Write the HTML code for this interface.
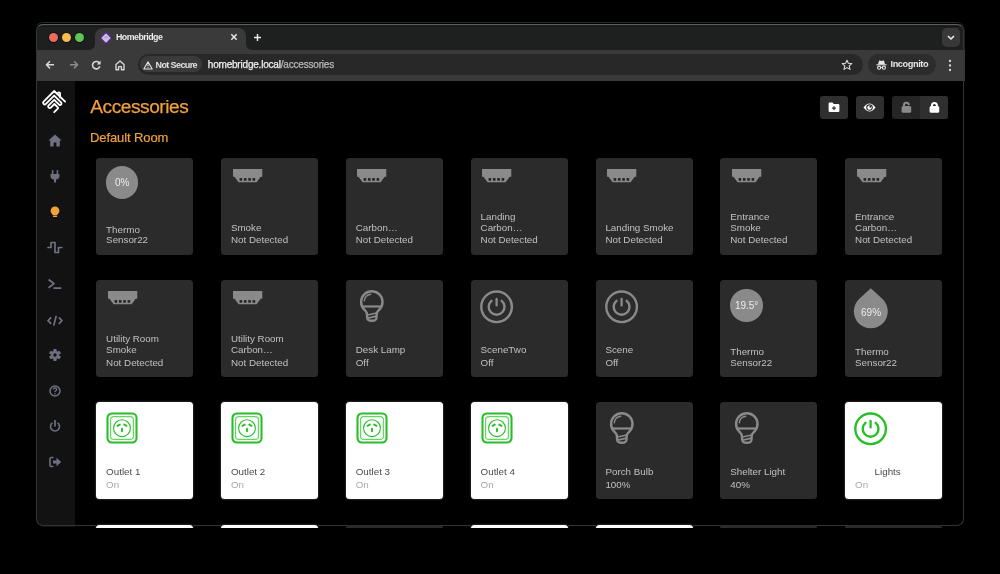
<!DOCTYPE html><html><head><meta charset="utf-8"><style>
*{box-sizing:border-box;margin:0;padding:0}
html,body{width:1000px;height:574px;background:#000;overflow:hidden;font-family:"Liberation Sans",sans-serif}
body{will-change:transform}
.a{position:absolute}
#win{position:absolute;left:35.5px;top:23px;width:929px;height:504px;border-radius:8px;overflow:hidden;background:#000}
#winborder{position:absolute;left:35.6px;top:24.3px;width:928.6px;height:501.7px;border-radius:7px;border:1.2px solid #343434;border-top-color:#5c5c5c;pointer-events:none}
#outer{position:absolute;left:34px;top:21.8px;width:932px;height:507.4px;border-radius:9px;border:1px solid transparent;border-top-color:#272727}
.tile{position:absolute;width:97px;height:97px;border-radius:3.5px;background:#2b2b2b}
.tile.on{background:#fff;box-shadow:0 0 0 1.2px #1c1c1c}
.t{position:absolute;left:9.8px;font-size:9.8px;line-height:10px;white-space:nowrap;color:#c0c0c0}
.on .t{color:#4a4a4a}
.on .t.s{color:#a8a8a8}
.circ{position:absolute;border-radius:50%;background:#8a8a8a;color:#ececec;font-size:10px;line-height:10px;text-align:center}
.btn{position:absolute;height:23px;border-radius:3px;background:#2f2f2f}
</style></head><body>
<div id="outer"></div>
<div id="win">
<div class="a" style="left:0;top:0;width:929px;height:27px;background:#1e1f1f"></div>
<div class="a" style="left:0;top:0;width:929px;height:1.3px;background:#000"></div>
<div class="a" style="left:0;top:2.6px;width:929px;height:1px;background:#171717"></div>
<div class="a" style="left:13.3px;top:10.2px;width:9px;height:9px;border-radius:50%;background:#ed6a5e;box-shadow:0 0 0 0.7px #0e0e0e"></div>
<div class="a" style="left:26.3px;top:10.2px;width:9px;height:9px;border-radius:50%;background:#f4be4f;box-shadow:0 0 0 0.7px #0e0e0e"></div>
<div class="a" style="left:39.3px;top:10.2px;width:9px;height:9px;border-radius:50%;background:#61c454;box-shadow:0 0 0 0.7px #0e0e0e"></div>
<div class="a" style="left:59.5px;top:5.3px;width:150.5px;height:22px;background:#3a3a3a;border-radius:8px 8px 0 0"></div>
<div class="a" style="left:53.5px;top:21px;width:6px;height:6px;background:radial-gradient(circle at 0 0,#1e1f1f 5.6px,#3a3a3a 6.2px)"></div>
<div class="a" style="left:210px;top:21px;width:6px;height:6px;background:radial-gradient(circle at 100% 0,#1e1f1f 5.6px,#3a3a3a 6.2px)"></div>
<svg class="a" style="left:64.6px;top:8.8px" width="12" height="12" viewBox="0 0 12 12"><path d="M6 0.9 Q6.6 0.9 7 1.3 L10.7 5 Q11.1 5.4 11.1 6 Q11.1 6.6 10.7 7 L7 10.7 Q6.6 11.1 6 11.1 Q5.4 11.1 5 10.7 L1.3 7 Q0.9 6.6 0.9 6 Q0.9 5.4 1.3 5 L5 1.3 Q5.4 0.9 6 0.9Z" fill="#c9bde0" stroke="#55239a" stroke-width="1.2"/><path d="M4 6.4 L6 4.4 L8 6.4" stroke="#8f7ab8" stroke-width="0.7" fill="none"/></svg>
<div class="a" style="left:80.5px;top:9.2px;font-size:8.8px;line-height:10px;font-weight:bold;color:#ececec;letter-spacing:-0.5px">Homebridge</div>
<svg class="a" style="left:194.9px;top:10.3px" width="8" height="8" viewBox="0 0 8 8"><path d="M1.3 1.3L6.7 6.7M6.7 1.3L1.3 6.7" stroke="#e8e8e8" stroke-width="1.5"/></svg>
<svg class="a" style="left:217.6px;top:9.8px" width="9" height="9" viewBox="0 0 9 9"><path d="M4.5 1V8M1 4.5H8" stroke="#e8e8e8" stroke-width="1.5"/></svg>
<div class="a" style="left:906.5px;top:5px;width:18px;height:18.5px;border-radius:5px;background:#383838"></div>
<svg class="a" style="left:911.5px;top:11.5px" width="8" height="6" viewBox="0 0 8 6"><path d="M1 1L4 4L7 1" stroke="#f0f0f0" stroke-width="1.5" fill="none"/></svg>
<div class="a" style="left:0;top:27px;width:929px;height:31px;background:#3a3a3a"></div>
<div class="a" style="left:0;top:27px;width:929px;height:31px">
<svg class="a" style="left:9.8px;top:10.3px" width="10" height="10" viewBox="0 0 10 10"><path d="M9 4.8H1.6M5 1.2L1.4 4.8L5 8.4" stroke="#d6d6d6" stroke-width="1.55" fill="none" stroke-linejoin="round"/></svg>
<svg class="a" style="left:33.3px;top:10.3px" width="10" height="10" viewBox="0 0 10 10"><path d="M1 4.8H8.4M5 1.2L8.6 4.8L5 8.4" stroke="#8c8c8c" stroke-width="1.5" fill="none" stroke-linejoin="round"/></svg>
<svg class="a" style="left:55.6px;top:10.2px" width="11" height="10" viewBox="0 0 11 10"><path d="M8.6 3.6A3.7 3.7 0 1 0 8.8 6.2" stroke="#d6d6d6" stroke-width="1.6" fill="none"/><path d="M9.6 0.6V4.4H5.8Z" fill="#d6d6d6"/></svg>
<svg class="a" style="left:79.6px;top:9.8px" width="10" height="11" viewBox="0 0 10 11"><path d="M1 4.6L5 1L9 4.6V9.8H6.4V6.6H3.6V9.8H1Z" stroke="#d6d6d6" stroke-width="1.4" fill="none" stroke-linejoin="round"/></svg>
<div class="a" style="left:102px;top:4px;width:725px;height:21px;border-radius:10.5px;background:#282828"></div>
<div class="a" style="left:104.5px;top:6.2px;width:62px;height:16px;border-radius:8px;background:#3a3a3a"></div>
<svg class="a" style="left:107.5px;top:10.5px" width="10" height="9" viewBox="0 0 10 9"><path d="M5 0.9L9.2 8H0.8Z" stroke="#e2e2e2" stroke-width="1.1" fill="none" stroke-linejoin="round"/><path d="M5 3.3V5.4" stroke="#e2e2e2" stroke-width="1"/><circle cx="5" cy="6.6" r="0.55" fill="#e2e2e2"/></svg>
<div class="a" style="left:120px;top:9.5px;font-size:9px;line-height:10px;font-weight:bold;color:#e2e2e2;letter-spacing:-0.6px">Not Secure</div>
<div class="a" style="left:172.3px;top:9px;font-size:10px;line-height:11px;color:#f0f0f0;letter-spacing:-0.2px;-webkit-text-stroke:0.25px #f0f0f0">homebridge.local<span style="color:#b8b8b8;-webkit-text-stroke:0.25px #b8b8b8">/accessories</span></div>
<svg class="a" style="left:805px;top:9px" width="12" height="12" viewBox="0 0 12 12"><path d="M6 1.2L7.35 4.3L10.8 4.6L8.2 6.9L9 10.4L6 8.6L3 10.4L3.8 6.9L1.2 4.6L4.65 4.3Z" stroke="#dadada" stroke-width="1.1" fill="none" stroke-linejoin="round"/></svg>
<div class="a" style="left:832px;top:4px;width:68px;height:21px;border-radius:10.5px;background:#2c2c2c"></div>
<svg class="a" style="left:840px;top:10px" width="11" height="10" viewBox="0 0 11 10"><path d="M3 0.8Q3.3 0.3 3.8 0.5L5.5 1L7.2 0.5Q7.7 0.3 8 0.8L9 4.2H2Z" fill="#e6e6e6"/><path d="M0.4 4.8H10.6" stroke="#e6e6e6" stroke-width="1.1"/><circle cx="3.1" cy="7.7" r="1.55" stroke="#e6e6e6" stroke-width="1.1" fill="none"/><circle cx="7.9" cy="7.7" r="1.55" stroke="#e6e6e6" stroke-width="1.1" fill="none"/><path d="M4.6 7.5H6.4" stroke="#e6e6e6" stroke-width="0.9"/></svg>
<div class="a" style="left:855px;top:9.3px;font-size:9.2px;line-height:10px;font-weight:bold;color:#e6e6e6;letter-spacing:-0.4px">Incognito</div>
<svg class="a" style="left:912px;top:8.5px" width="4" height="13" viewBox="0 0 4 13"><circle cx="2" cy="2" r="1.15" fill="#dcdcdc"/><circle cx="2" cy="6.5" r="1.15" fill="#dcdcdc"/><circle cx="2" cy="11" r="1.15" fill="#dcdcdc"/></svg>
</div>
<div class="a" style="left:0;top:58px;width:929px;height:446px;background:#000">
<div class="a" style="left:0;top:0;width:39.5px;height:446px;background:#121212"></div>
</div>
</div>
<div id="winborder"></div>
<div class="a" style="left:0;top:0;width:1000px;height:528px;overflow:hidden">
<div class="a" style="left:0;top:0;width:1000px;height:1000px;clip-path:inset(81px 36.3px 46.7px 36.3px round 0 0 8px 8px)">
<svg class="a" style="left:40px;top:88px" width="30" height="30" viewBox="0 0 30 30"><g fill="none" stroke="#fff" stroke-width="1.85" stroke-linecap="round" stroke-linejoin="round" transform="translate(0 0.4)"><path d="M25.1,13.2 L14.2,2.6 L3.6,13.2 A1.6,1.6 0 0 0 5.9,15.5 L14.2,7.2 L21.2,14.2 A1.5,1.5 0 0 1 19.1,16.3 L14.2,11.4 L8.4,17.2 A1.6,1.6 0 0 0 10.6,19.4 L14.4,15.6 L17.8,19 Q18.4,19.6 17.8,20.2 L14.2,23.8"/><path d="M17.7,5 Q17.9,4 18.9,4 Q20.1,4 20.1,5 V9"/></g></svg>
<svg class="a" style="left:48px;top:133.5px" width="14" height="13" viewBox="0 0 14 13"><path d="M7 0.6 L13.6 6.6 H11.8 V12.4 H8.4 V8.6 H5.6 V12.4 H2.2 V6.6 H0.4Z" fill="#6e7080"/></svg>
<svg class="a" style="left:50px;top:169.5px" width="10" height="13" viewBox="0 0 10 13"><path d="M2.6 0.8V4M7.4 0.8V4" stroke="#6e7080" stroke-width="1.6" stroke-linecap="round"/><path d="M0.5 4H9.5V6.2Q9.5 9.2 6 9.6V12.4H4V9.6Q0.5 9.2 0.5 6.2Z" fill="#6e7080"/></svg>
<svg class="a" style="left:50px;top:205.5px" width="10" height="12" viewBox="0 0 10 12"><path d="M5 0.5A4.4 4.4 0 0 1 9.4 4.9C9.4 6.6 7.8 7.6 7.3 9H2.7C2.2 7.6 0.6 6.6 0.6 4.9A4.4 4.4 0 0 1 5 0.5Z" fill="#f2a33a"/><rect x="2.9" y="9.6" width="4.2" height="1.3" rx="0.5" fill="#f2a33a"/></svg>
<svg class="a" style="left:47px;top:240.5px" width="16" height="13" viewBox="0 0 16 13"><path d="M1 6.5H4V1.5H8V11.5H11.5V6.5H14.8" stroke="#6e7080" stroke-width="1.7" fill="none" stroke-linejoin="round" stroke-linecap="round"/></svg>
<svg class="a" style="left:47px;top:277.5px" width="16" height="12" viewBox="0 0 16 12"><path d="M1.6 1.5L6.8 5.6L1.6 9.7" stroke="#6e7080" stroke-width="1.8" fill="none"/><path d="M6.5 10.2H14.3" stroke="#6e7080" stroke-width="1.8"/></svg>
<svg class="a" style="left:47px;top:314.5px" width="16" height="12" viewBox="0 0 16 12"><path d="M4.2 2.4L1 5.6L4.2 8.8M11.8 2.4L15 5.6L11.8 8.8M9.3 0.8L6.7 10.6" stroke="#6e7080" stroke-width="1.7" fill="none"/></svg>
<svg class="a" style="left:48.5px;top:348.6px" width="12" height="12" viewBox="0 0 12 12"><rect x="4.3" y="0" width="3.4" height="3.2" rx="0.9" fill="#6e7080" transform="rotate(0 6 6)"/><rect x="4.3" y="0" width="3.4" height="3.2" rx="0.9" fill="#6e7080" transform="rotate(60 6 6)"/><rect x="4.3" y="0" width="3.4" height="3.2" rx="0.9" fill="#6e7080" transform="rotate(120 6 6)"/><rect x="4.3" y="0" width="3.4" height="3.2" rx="0.9" fill="#6e7080" transform="rotate(180 6 6)"/><rect x="4.3" y="0" width="3.4" height="3.2" rx="0.9" fill="#6e7080" transform="rotate(240 6 6)"/><rect x="4.3" y="0" width="3.4" height="3.2" rx="0.9" fill="#6e7080" transform="rotate(300 6 6)"/><circle cx="6" cy="6" r="4" fill="#6e7080"/><circle cx="6" cy="6" r="1.7" fill="#121212"/></svg>
<svg class="a" style="left:49px;top:384.5px" width="12" height="12" viewBox="0 0 12 12"><circle cx="6" cy="6" r="5" stroke="#6e7080" stroke-width="1.5" fill="none"/><path d="M4.3 4.6Q4.3 3 6 3Q7.7 3 7.7 4.5Q7.7 5.5 6.6 5.9Q6 6.2 6 7" stroke="#6e7080" stroke-width="1.3" fill="none"/><circle cx="6" cy="8.7" r="0.75" fill="#6e7080"/></svg>
<svg class="a" style="left:49px;top:420px" width="12" height="12" viewBox="0 0 12 12"><path d="M3.5 2.8A4.5 4.5 0 1 0 8.5 2.8" stroke="#6e7080" stroke-width="1.6" fill="none"/><path d="M6 0.6V5.8" stroke="#6e7080" stroke-width="1.7" stroke-linecap="round"/></svg>
<svg class="a" style="left:48.5px;top:456px" width="13" height="12" viewBox="0 0 13 12"><path d="M4.5 1.5H2.3Q1 1.5 1 2.8V9.2Q1 10.5 2.3 10.5H4.5" stroke="#6e7080" stroke-width="1.6" fill="none"/><path d="M4 4.6H7.5V1.8L12.2 6L7.5 10.2V7.4H4Z" fill="#6e7080"/></svg>
<div class="a" style="left:90.3px;top:97px;font-size:19.1px;line-height:20px;color:#f0a13c;letter-spacing:-0.45px;-webkit-text-stroke:0.25px #f0a13c">Accessories</div>
<div class="a" style="left:90px;top:131px;font-size:13px;line-height:14px;color:#f0a13c;letter-spacing:-0.1px;-webkit-text-stroke:0.2px #f0a13c">Default Room</div>
<div class="btn" style="left:819.8px;top:96px;width:28px"></div>
<div class="btn" style="left:855.7px;top:96px;width:28px"></div>
<div class="btn" style="left:891.7px;top:96px;width:56.6px;background:#252525"></div>
<div class="a" style="left:919.8px;top:96px;width:28.5px;height:23px;border-radius:0 3px 3px 0;background:#2f2f2f"></div>
<svg class="a" style="left:827.6px;top:101.5px" width="12" height="11" viewBox="0 0 12 11"><path d="M0.6 1.8Q0.6 0.6 1.8 0.6H4.4L5.8 2H10.2Q11.4 2 11.4 3.2V8.8Q11.4 10 10.2 10H1.8Q0.6 10 0.6 8.8Z" fill="#fff"/><path d="M6 4.2V8.2M4 6.2H8" stroke="#3a3a3a" stroke-width="1.3"/></svg>
<svg class="a" style="left:863.3px;top:101.5px" width="13" height="11" viewBox="0 0 13 11"><path d="M0.5 5.5Q6.5 -2.6 12.5 5.5Q6.5 13.6 0.5 5.5Z" fill="#fff"/><circle cx="6.5" cy="5.5" r="3.3" fill="#2f2f2f"/><circle cx="6.5" cy="5.6" r="2.2" fill="#fff"/><circle cx="7.3" cy="4.7" r="0.95" fill="#2f2f2f"/></svg>
<svg class="a" style="left:900.5px;top:100.5px" width="12" height="13" viewBox="0 0 12 13"><path d="M2.9 5.6V4.6A2.5 2.5 0 0 1 7.9 4.1" stroke="#8a8a8a" stroke-width="2" fill="none"/><rect x="0.6" y="4.9" width="9.6" height="6.9" rx="1.5" fill="#8a8a8a"/></svg>
<svg class="a" style="left:928.7px;top:100.5px" width="12" height="13" viewBox="0 0 12 13"><path d="M2.9 5.6V4.6A2.5 2.5 0 0 1 7.9 4.6V5.6" stroke="#fff" stroke-width="2" fill="none"/><rect x="0.6" y="4.9" width="9.6" height="6.9" rx="1.5" fill="#fff"/></svg>
<div class="tile" style="left:96.3px;top:157.7px"><div class="circ" style="left:9.8px;top:8.7px;width:32.2px;height:32.2px;padding-top:11.6px">0%</div><div class="t" style="top:67.2px">Thermo</div><div class="t" style="top:77.7px">Sensor22</div></div>
<div class="tile" style="left:221.13px;top:157.7px"><svg class="a" style="left:11.4px;top:11px" width="30" height="14" viewBox="0 0 30 14"><path d="M0 0H29.3V7.8H27.6L23.6 13.2H5.6L1.5 7.8H0Z" fill="#8a8a8a"/><rect x="6.60" y="9.1" width="2.6" height="2.6" fill="#222"/><rect x="10.93" y="9.1" width="2.6" height="2.6" fill="#222"/><rect x="15.26" y="9.1" width="2.6" height="2.6" fill="#222"/><rect x="19.59" y="9.1" width="2.6" height="2.6" fill="#222"/></svg><div class="t" style="top:65px">Smoke</div><div class="t s" style="top:77.7px">Not Detected</div></div>
<div class="tile" style="left:345.96px;top:157.7px"><svg class="a" style="left:11.4px;top:11px" width="30" height="14" viewBox="0 0 30 14"><path d="M0 0H29.3V7.8H27.6L23.6 13.2H5.6L1.5 7.8H0Z" fill="#8a8a8a"/><rect x="6.60" y="9.1" width="2.6" height="2.6" fill="#222"/><rect x="10.93" y="9.1" width="2.6" height="2.6" fill="#222"/><rect x="15.26" y="9.1" width="2.6" height="2.6" fill="#222"/><rect x="19.59" y="9.1" width="2.6" height="2.6" fill="#222"/></svg><div class="t" style="top:65px">Carbon…</div><div class="t s" style="top:77.7px">Not Detected</div></div>
<div class="tile" style="left:470.79px;top:157.7px"><svg class="a" style="left:11.4px;top:11px" width="30" height="14" viewBox="0 0 30 14"><path d="M0 0H29.3V7.8H27.6L23.6 13.2H5.6L1.5 7.8H0Z" fill="#8a8a8a"/><rect x="6.60" y="9.1" width="2.6" height="2.6" fill="#222"/><rect x="10.93" y="9.1" width="2.6" height="2.6" fill="#222"/><rect x="15.26" y="9.1" width="2.6" height="2.6" fill="#222"/><rect x="19.59" y="9.1" width="2.6" height="2.6" fill="#222"/></svg><div class="t" style="top:54.5px">Landing</div><div class="t" style="top:65px">Carbon…</div><div class="t s" style="top:77.7px">Not Detected</div></div>
<div class="tile" style="left:595.62px;top:157.7px"><svg class="a" style="left:11.4px;top:11px" width="30" height="14" viewBox="0 0 30 14"><path d="M0 0H29.3V7.8H27.6L23.6 13.2H5.6L1.5 7.8H0Z" fill="#8a8a8a"/><rect x="6.60" y="9.1" width="2.6" height="2.6" fill="#222"/><rect x="10.93" y="9.1" width="2.6" height="2.6" fill="#222"/><rect x="15.26" y="9.1" width="2.6" height="2.6" fill="#222"/><rect x="19.59" y="9.1" width="2.6" height="2.6" fill="#222"/></svg><div class="t" style="top:65px">Landing Smoke</div><div class="t s" style="top:77.7px">Not Detected</div></div>
<div class="tile" style="left:720.45px;top:157.7px"><svg class="a" style="left:11.4px;top:11px" width="30" height="14" viewBox="0 0 30 14"><path d="M0 0H29.3V7.8H27.6L23.6 13.2H5.6L1.5 7.8H0Z" fill="#8a8a8a"/><rect x="6.60" y="9.1" width="2.6" height="2.6" fill="#222"/><rect x="10.93" y="9.1" width="2.6" height="2.6" fill="#222"/><rect x="15.26" y="9.1" width="2.6" height="2.6" fill="#222"/><rect x="19.59" y="9.1" width="2.6" height="2.6" fill="#222"/></svg><div class="t" style="top:54.5px">Entrance</div><div class="t" style="top:65px">Smoke</div><div class="t s" style="top:77.7px">Not Detected</div></div>
<div class="tile" style="left:845.28px;top:157.7px"><svg class="a" style="left:11.4px;top:11px" width="30" height="14" viewBox="0 0 30 14"><path d="M0 0H29.3V7.8H27.6L23.6 13.2H5.6L1.5 7.8H0Z" fill="#8a8a8a"/><rect x="6.60" y="9.1" width="2.6" height="2.6" fill="#222"/><rect x="10.93" y="9.1" width="2.6" height="2.6" fill="#222"/><rect x="15.26" y="9.1" width="2.6" height="2.6" fill="#222"/><rect x="19.59" y="9.1" width="2.6" height="2.6" fill="#222"/></svg><div class="t" style="top:54.5px">Entrance</div><div class="t" style="top:65px">Carbon…</div><div class="t s" style="top:77.7px">Not Detected</div></div>
<div class="tile" style="left:96.3px;top:279.85px"><svg class="a" style="left:11.4px;top:11px" width="30" height="14" viewBox="0 0 30 14"><path d="M0 0H29.3V7.8H27.6L23.6 13.2H5.6L1.5 7.8H0Z" fill="#8a8a8a"/><rect x="6.60" y="9.1" width="2.6" height="2.6" fill="#222"/><rect x="10.93" y="9.1" width="2.6" height="2.6" fill="#222"/><rect x="15.26" y="9.1" width="2.6" height="2.6" fill="#222"/><rect x="19.59" y="9.1" width="2.6" height="2.6" fill="#222"/></svg><div class="t" style="top:54.5px">Utility Room</div><div class="t" style="top:65px">Smoke</div><div class="t s" style="top:77.7px">Not Detected</div></div>
<div class="tile" style="left:221.13px;top:279.85px"><svg class="a" style="left:11.4px;top:11px" width="30" height="14" viewBox="0 0 30 14"><path d="M0 0H29.3V7.8H27.6L23.6 13.2H5.6L1.5 7.8H0Z" fill="#8a8a8a"/><rect x="6.60" y="9.1" width="2.6" height="2.6" fill="#222"/><rect x="10.93" y="9.1" width="2.6" height="2.6" fill="#222"/><rect x="15.26" y="9.1" width="2.6" height="2.6" fill="#222"/><rect x="19.59" y="9.1" width="2.6" height="2.6" fill="#222"/></svg><div class="t" style="top:54.5px">Utility Room</div><div class="t" style="top:65px">Carbon…</div><div class="t s" style="top:77.7px">Not Detected</div></div>
<div class="tile" style="left:345.96px;top:279.85px"><svg class="a" style="left:10.3px;top:7.45px" width="32" height="38" viewBox="0 0 32 38"><path d="M7.6 21.8 A10.7 10.7 0 1 1 24 21.8 Q21.4 24.2 20.8 26 L20.4 31.2 Q20.1 33.8 15.8 33.8 Q11.5 33.8 11.2 31.2 L10.8 26 Q10.2 24.2 7.6 21.8 Z" stroke="#8a8a8a" stroke-width="2.4" fill="none" stroke-linejoin="round"/><path d="M5.4 19.5H26.2" stroke="#8a8a8a" stroke-width="2.2"/><path d="M8.3 13.8A7.5 7.5 0 0 1 14.8 7.2" stroke="#8a8a8a" stroke-width="1.4" fill="none" stroke-linecap="round"/><path d="M11.4 28L20.6 26M11.8 31.2L20.4 29.2" stroke="#8a8a8a" stroke-width="1.7"/></svg><div class="t" style="top:65px">Desk Lamp</div><div class="t s" style="top:77.7px">Off</div></div>
<div class="tile" style="left:470.79px;top:279.85px"><svg class="a" style="left:8.2px;top:8.75px" width="36" height="36" viewBox="0 0 36 36"><circle cx="17.6" cy="17.8" r="15.3" stroke="#8a8a8a" stroke-width="2.4" fill="none"/><path d="M12.5 11.8A7.9 7.9 0 1 0 22.7 11.8" stroke="#8a8a8a" stroke-width="2.4" fill="none" stroke-linecap="round"/><path d="M17.6 9.9V16.4" stroke="#8a8a8a" stroke-width="2.3" stroke-linecap="round"/></svg><div class="t" style="top:65px">SceneTwo</div><div class="t s" style="top:77.7px">Off</div></div>
<div class="tile" style="left:595.62px;top:279.85px"><svg class="a" style="left:8.2px;top:8.75px" width="36" height="36" viewBox="0 0 36 36"><circle cx="17.6" cy="17.8" r="15.3" stroke="#8a8a8a" stroke-width="2.4" fill="none"/><path d="M12.5 11.8A7.9 7.9 0 1 0 22.7 11.8" stroke="#8a8a8a" stroke-width="2.4" fill="none" stroke-linecap="round"/><path d="M17.6 9.9V16.4" stroke="#8a8a8a" stroke-width="2.3" stroke-linecap="round"/></svg><div class="t" style="top:65px">Scene</div><div class="t s" style="top:77.7px">Off</div></div>
<div class="tile" style="left:720.45px;top:279.85px"><div class="circ" style="left:9.9px;top:9.5px;width:32.6px;height:32.6px;padding-top:11.8px">19.5°</div><div class="t" style="top:67.2px">Thermo</div><div class="t" style="top:77.7px">Sensor22</div></div>
<div class="tile" style="left:845.28px;top:279.85px"><svg class="a" style="left:7.7px;top:7.45px" width="36" height="44" viewBox="0 0 36 44"><path d="M17.8 1.3 L29.26 11.75 A17 17 0 1 1 6.34 11.75Z" fill="#8a8a8a"/></svg><div class="a" style="left:0;top:28.2px;width:51.6px;text-align:center;color:#ececec;font-size:10px;line-height:10px">69%</div><div class="t" style="top:67.2px">Thermo</div><div class="t" style="top:77.7px">Sensor22</div></div>
<div class="tile on" style="left:96.3px;top:402px"><svg class="a" style="left:10.1px;top:10.1px" width="32" height="32" viewBox="0 0 32 32"><rect x="1.5" y="1.5" width="29" height="29" rx="4.2" stroke="#26c026" stroke-width="2.1" fill="none"/><rect x="4.6" y="4.6" width="22.8" height="22.8" rx="3.2" stroke="#6ad46a" stroke-width="1.25" fill="none"/><circle cx="16" cy="16.2" r="8.4" stroke="#26c026" stroke-width="1.1" fill="none"/><path d="M11.5 13.8L13.8 12.6M20.5 13.8L18.2 12.6M16 16.8V19.3" stroke="#26c026" stroke-width="1.9" stroke-linecap="round"/></svg><div class="t" style="top:65px">Outlet 1</div><div class="t s" style="top:77.7px">On</div></div>
<div class="tile on" style="left:221.13px;top:402px"><svg class="a" style="left:10.1px;top:10.1px" width="32" height="32" viewBox="0 0 32 32"><rect x="1.5" y="1.5" width="29" height="29" rx="4.2" stroke="#26c026" stroke-width="2.1" fill="none"/><rect x="4.6" y="4.6" width="22.8" height="22.8" rx="3.2" stroke="#6ad46a" stroke-width="1.25" fill="none"/><circle cx="16" cy="16.2" r="8.4" stroke="#26c026" stroke-width="1.1" fill="none"/><path d="M11.5 13.8L13.8 12.6M20.5 13.8L18.2 12.6M16 16.8V19.3" stroke="#26c026" stroke-width="1.9" stroke-linecap="round"/></svg><div class="t" style="top:65px">Outlet 2</div><div class="t s" style="top:77.7px">On</div></div>
<div class="tile on" style="left:345.96px;top:402px"><svg class="a" style="left:10.1px;top:10.1px" width="32" height="32" viewBox="0 0 32 32"><rect x="1.5" y="1.5" width="29" height="29" rx="4.2" stroke="#26c026" stroke-width="2.1" fill="none"/><rect x="4.6" y="4.6" width="22.8" height="22.8" rx="3.2" stroke="#6ad46a" stroke-width="1.25" fill="none"/><circle cx="16" cy="16.2" r="8.4" stroke="#26c026" stroke-width="1.1" fill="none"/><path d="M11.5 13.8L13.8 12.6M20.5 13.8L18.2 12.6M16 16.8V19.3" stroke="#26c026" stroke-width="1.9" stroke-linecap="round"/></svg><div class="t" style="top:65px">Outlet 3</div><div class="t s" style="top:77.7px">On</div></div>
<div class="tile on" style="left:470.79px;top:402px"><svg class="a" style="left:10.1px;top:10.1px" width="32" height="32" viewBox="0 0 32 32"><rect x="1.5" y="1.5" width="29" height="29" rx="4.2" stroke="#26c026" stroke-width="2.1" fill="none"/><rect x="4.6" y="4.6" width="22.8" height="22.8" rx="3.2" stroke="#6ad46a" stroke-width="1.25" fill="none"/><circle cx="16" cy="16.2" r="8.4" stroke="#26c026" stroke-width="1.1" fill="none"/><path d="M11.5 13.8L13.8 12.6M20.5 13.8L18.2 12.6M16 16.8V19.3" stroke="#26c026" stroke-width="1.9" stroke-linecap="round"/></svg><div class="t" style="top:65px">Outlet 4</div><div class="t s" style="top:77.7px">On</div></div>
<div class="tile" style="left:595.62px;top:402px"><svg class="a" style="left:10.3px;top:7.45px" width="32" height="38" viewBox="0 0 32 38"><path d="M7.6 21.8 A10.7 10.7 0 1 1 24 21.8 Q21.4 24.2 20.8 26 L20.4 31.2 Q20.1 33.8 15.8 33.8 Q11.5 33.8 11.2 31.2 L10.8 26 Q10.2 24.2 7.6 21.8 Z" stroke="#8a8a8a" stroke-width="2.4" fill="none" stroke-linejoin="round"/><path d="M5.4 19.5H26.2" stroke="#8a8a8a" stroke-width="2.2"/><path d="M8.3 13.8A7.5 7.5 0 0 1 14.8 7.2" stroke="#8a8a8a" stroke-width="1.4" fill="none" stroke-linecap="round"/><path d="M11.4 28L20.6 26M11.8 31.2L20.4 29.2" stroke="#8a8a8a" stroke-width="1.7"/></svg><div class="t" style="top:65px">Porch Bulb</div><div class="t s" style="top:77.7px">100%</div></div>
<div class="tile" style="left:720.45px;top:402px"><svg class="a" style="left:10.3px;top:7.45px" width="32" height="38" viewBox="0 0 32 38"><path d="M7.6 21.8 A10.7 10.7 0 1 1 24 21.8 Q21.4 24.2 20.8 26 L20.4 31.2 Q20.1 33.8 15.8 33.8 Q11.5 33.8 11.2 31.2 L10.8 26 Q10.2 24.2 7.6 21.8 Z" stroke="#8a8a8a" stroke-width="2.4" fill="none" stroke-linejoin="round"/><path d="M5.4 19.5H26.2" stroke="#8a8a8a" stroke-width="2.2"/><path d="M8.3 13.8A7.5 7.5 0 0 1 14.8 7.2" stroke="#8a8a8a" stroke-width="1.4" fill="none" stroke-linecap="round"/><path d="M11.4 28L20.6 26M11.8 31.2L20.4 29.2" stroke="#8a8a8a" stroke-width="1.7"/></svg><div class="t" style="top:65px">Shelter Light</div><div class="t s" style="top:77.7px">40%</div></div>
<div class="tile on" style="left:845.28px;top:402px"><svg class="a" style="left:8.2px;top:8.75px" width="36" height="36" viewBox="0 0 36 36"><circle cx="17.6" cy="17.8" r="15.3" stroke="#26c026" stroke-width="2.4" fill="none"/><path d="M12.5 11.8A7.9 7.9 0 1 0 22.7 11.8" stroke="#26c026" stroke-width="2.4" fill="none" stroke-linecap="round"/><path d="M17.6 9.9V16.4" stroke="#26c026" stroke-width="2.3" stroke-linecap="round"/></svg><div class="t" style="top:65px"><span style="margin-left:19.5px">Lights</span></div><div class="t s" style="top:77.7px">On</div></div>
<div class="tile on" style="left:96.3px;top:524.9px"></div>
<div class="tile on" style="left:221.13px;top:524.9px"></div>
<div class="tile" style="left:345.96px;top:524.9px"></div>
<div class="tile on" style="left:470.79px;top:524.9px"></div>
<div class="tile on" style="left:595.62px;top:524.9px"></div>
<div class="tile" style="left:720.45px;top:524.9px"></div>
<div class="tile" style="left:845.28px;top:524.9px"></div>
</div></div>
</body></html>
